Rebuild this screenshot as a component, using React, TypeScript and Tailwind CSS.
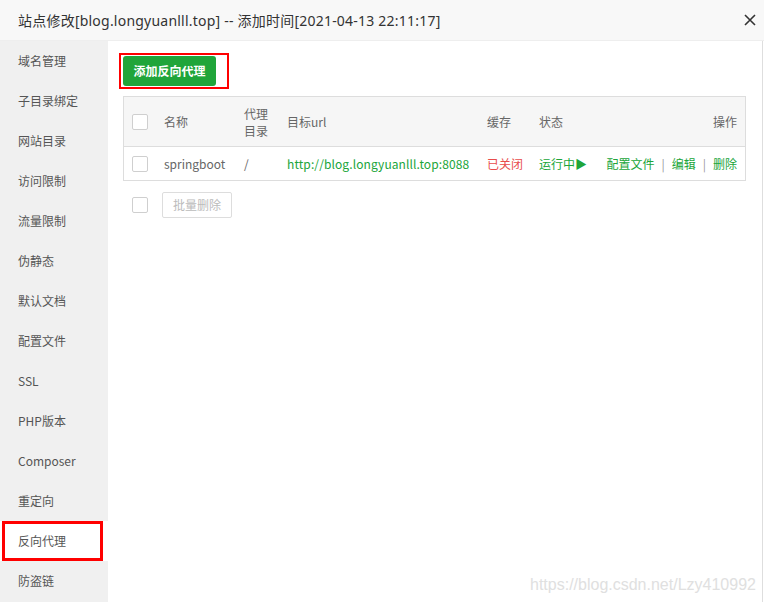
import React from "react";

const font = '"Noto Sans CJK SC", "Noto Sans", sans-serif';

const menu = [
  "域名管理",
  "子目录绑定",
  "网站目录",
  "访问限制",
  "流量限制",
  "伪静态",
  "默认文档",
  "配置文件",
  "SSL",
  "PHP版本",
  "Composer",
  "重定向",
  "反向代理",
  "防盗链",
];

function Checkbox() {
  return <span className="block w-4 h-4 border border-[#cfcfcf] bg-white rounded-[2px]" />;
}

export default function App() {
  return (
    <div className="relative w-[764px] h-[602px] bg-white overflow-hidden text-[#666]" style={{ fontFamily: font }}>
      {/* title bar */}
      <div className="h-[41px] bg-[#f8f8f8] border-b border-[#eee] flex items-center justify-between pl-[18px] pr-[6px]">
        <span
          className="text-[14px] text-[#333] tracking-[0.22px]"
          style={{ fontFamily: '"Noto Sans", "Noto Sans CJK SC", sans-serif' }}
        >
          站点修改[blog.longyuanlll.top] -- 添加时间[2021-04-13 22:11:17]
        </span>
        <svg width="12" height="12" viewBox="0 0 12 12" className="mr-[2px]">
          <path d="M1 1 L11 11 M11 1 L1 11" stroke="#333" strokeWidth="1.6" />
        </svg>
      </div>

      <div className="flex h-[561px]">
        {/* side menu */}
        <div className="w-[108px] bg-[#f0f0f0] flex flex-col">
          {menu.map((m) => {
            const active = m === "反向代理";
            return (
              <div
                key={m}
                className={
                  "relative h-10 shrink-0 flex items-center pl-[18px] text-[12px] text-[#555] " +
                  (active ? "bg-white" : "")
                }
              >
                {m}
                {active && (
                  <span className="absolute left-[2px] top-0 w-[101px] h-10 border-[3px] border-[#ff0000]" />
                )}
              </div>
            );
          })}
        </div>

        {/* content */}
        <div className="flex-1 mr-[1px] border-r border-[#dedede] pl-[15px] pt-[15px] pr-[16px]">
          <div className="relative w-fit">
            <button className="h-[30px] w-[93px] rounded-[3px] bg-[#20a53a] text-white text-[12px] font-bold">
              添加反向代理
            </button>
            <span className="absolute left-[-4px] top-[-3px] w-[110px] h-[36px] border-2 border-[#ff0000]" />
          </div>

          <div className="mt-[10px] w-[623px] border border-[#ddd] text-[12px]">
            <div className="flex items-center h-[50px] bg-[#f6f6f6] border-b border-[#ddd]">
              <div className="w-[32px] pl-[8px]"><Checkbox /></div>
              <div className="w-[80px] pl-[8px]">名称</div>
              <div className="w-[43px] pl-[8px] leading-[17px]">代理<br />目录</div>
              <div className="w-[200px] pl-[8px]">目标url</div>
              <div className="w-[52px] pl-[8px]">缓存</div>
              <div className="w-[67px] pl-[8px]">状态</div>
              <div className="flex-1 pr-[8px] text-right">操作</div>
            </div>
            <div className="flex items-center h-[33px]">
              <div className="w-[32px] pl-[8px]"><Checkbox /></div>
              <div className="w-[80px] pl-[8px]">springboot</div>
              <div className="w-[43px] pl-[8px]">/</div>
              <div className="w-[200px] pl-[8px] text-[#20a53a] tracking-[0.1px]">http://blog.longyuanlll.top:8088</div>
              <div className="w-[52px] pl-[8px] text-[#e84c4c]">已关闭</div>
              <div className="w-[67px] pl-[8px] text-[#20a53a]">运行中▶</div>
              <div className="flex-1 pr-[8px] text-right text-[#20a53a]">
                配置文件<span className="text-[#999] mx-[7px]">|</span>编辑<span className="text-[#999] mx-[7px]">|</span>删除
              </div>
            </div>
          </div>

          <div className="flex items-center mt-[11px]">
            <div className="w-[39px] pl-[9px]"><Checkbox /></div>
            <button className="h-[26px] w-[70px] border border-[#ddd] rounded-[2px] bg-white text-[12px] text-[#bbb]">
              批量删除
            </button>
          </div>
        </div>
      </div>

      {/* watermark */}
      <span
        className="absolute left-[530px] top-[573px] text-[16px] text-[#e0e0e0]"
        style={{ fontFamily: '"Liberation Sans", Arial, sans-serif' }}
      >
        https://blog.csdn.net/Lzy410992
      </span>
    </div>
  );
}
